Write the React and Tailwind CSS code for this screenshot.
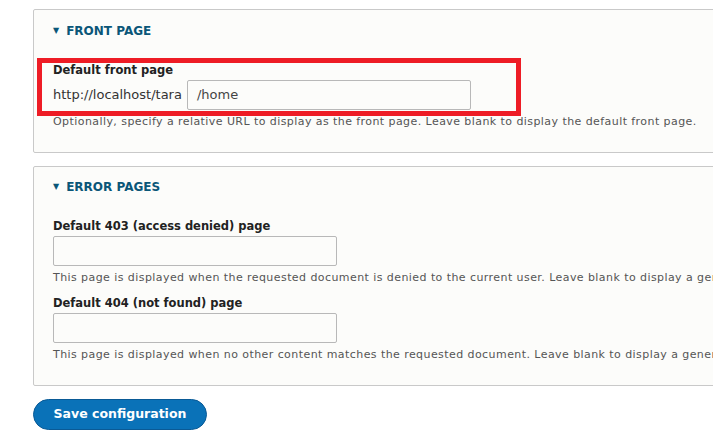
import React from "react";

const font = { fontFamily: '"DejaVu Sans", "Lucida Grande", Verdana, sans-serif' };

function Legend({ children }) {
  return (
    <div className="flex items-center h-[20px] text-[12px] font-bold text-[#0a5678]">
      <span className="text-[8px] mr-[7px]">▼</span>
      <span>{children}</span>
    </div>
  );
}

function Field({ label, desc }) {
  return (
    <div className="flex flex-col">
      <div className="text-[11.5px] font-bold text-[#222] leading-[16px]">{label}</div>
      <div className="w-[284px] h-[30px] mt-[2px] border border-[#b8b8b8] bg-[#fcfcfa] rounded-[2px]" />
      <div className="text-[11px] tracking-[0.43px] text-[#555] leading-[16px] mt-[4px] whitespace-nowrap">{desc}</div>
    </div>
  );
}

export default function App() {
  return (
    <div className="w-[713px] h-[440px] bg-white overflow-hidden relative" style={font}>
      <div className="pl-[33px] pt-[9px]">
        <div className="w-[720px] h-[144px] border border-[#c9c9c9] rounded-[2px] bg-[#fcfcfa] pl-[19px] pt-[11px]">
          <Legend>FRONT PAGE</Legend>
          <div className="mt-[21px] text-[11.5px] font-bold text-[#222] leading-[16px]">Default front page</div>
          <div className="flex items-center mt-[2px]">
            <span className="text-[13px] text-[#333] mr-[5px]">http://localhost/tara</span>
            <div className="w-[284px] h-[30px] border border-[#b8b8b8] bg-[#fcfcfa] rounded-[2px] flex items-center px-[9px] text-[13px] text-[#444]">
              /home
            </div>
          </div>
          <div className="text-[11px] tracking-[0.43px] text-[#555] leading-[16px] mt-[4px] whitespace-nowrap">
            Optionally, specify a relative URL to display as the front page. Leave blank to display the default front page.
          </div>
        </div>

        <div className="mt-[13px] w-[720px] h-[220px] border border-[#c9c9c9] rounded-[2px] bg-[#fcfcfa] pl-[19px] pt-[10px] flex flex-col">
          <Legend>ERROR PAGES</Legend>
          <div className="mt-[21px]">
            <Field
              label="Default 403 (access denied) page"
              desc="This page is displayed when the requested document is denied to the current user. Leave blank to display a generic &quot;access denied&quot; page."
            />
          </div>
          <div className="mt-[9px]">
            <Field
              label="Default 404 (not found) page"
              desc="This page is displayed when no other content matches the requested document. Leave blank to display a generic &quot;page not found&quot; page."
            />
          </div>
        </div>

        <button className="mt-[13px] w-[174px] h-[31px] rounded-full bg-[#0a72b8] border border-[#0a5a96] text-white font-bold text-[12.5px]">
          Save configuration
        </button>
      </div>

      <div className="absolute left-[37px] top-[58px] w-[484px] h-[58px] border-[5px] border-[#ee1c25]" />
    </div>
  );
}
